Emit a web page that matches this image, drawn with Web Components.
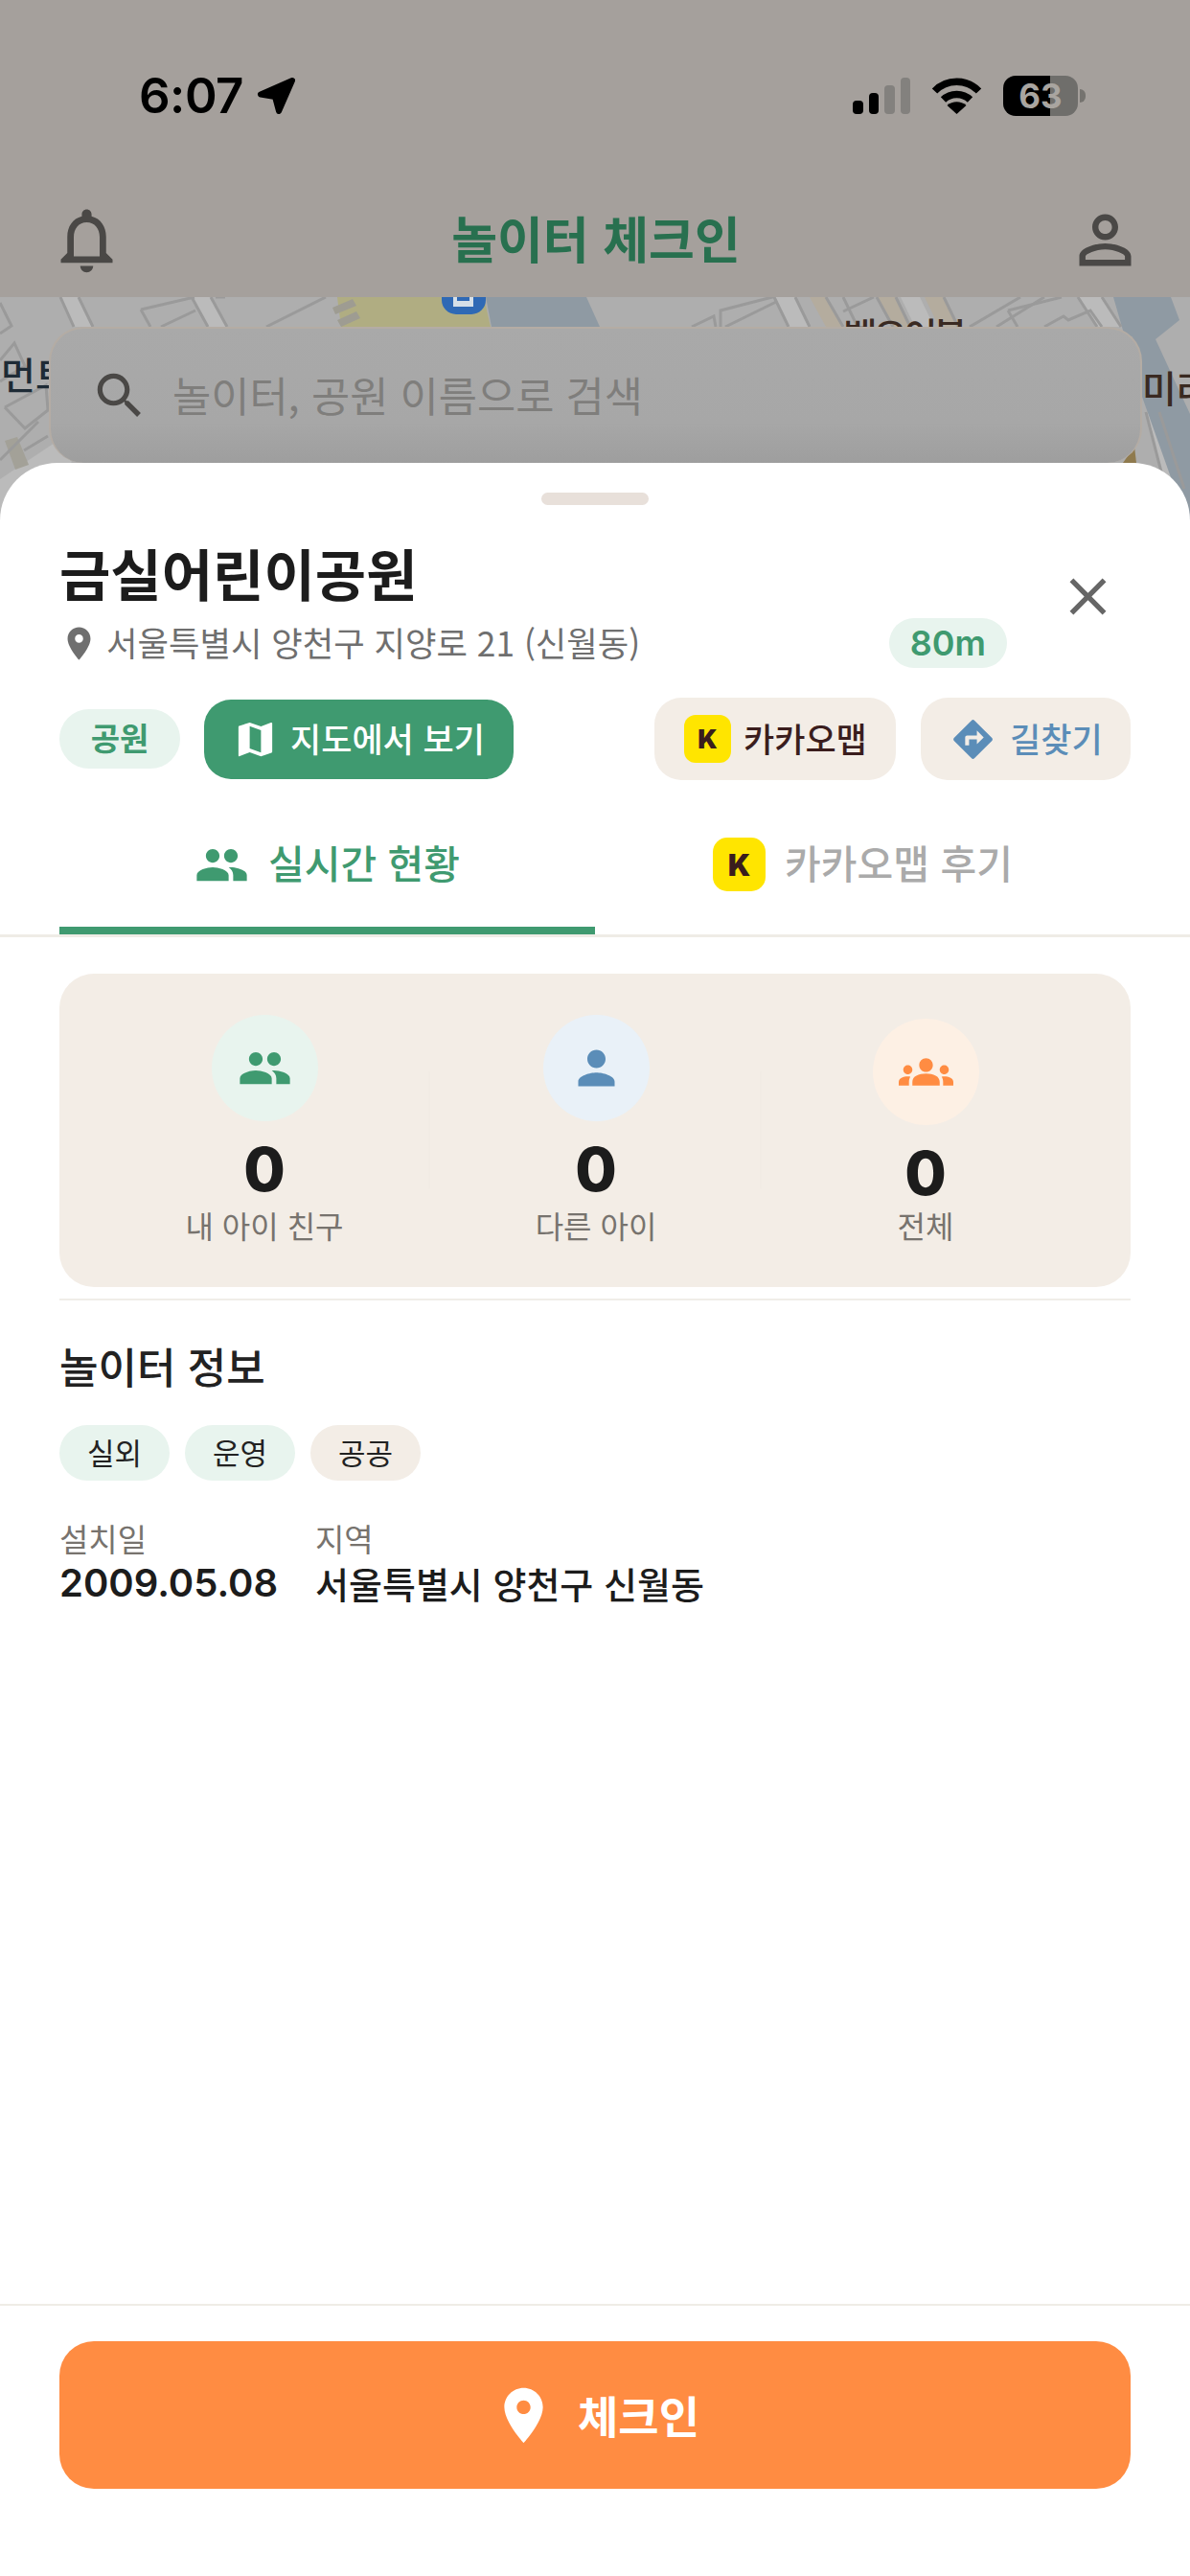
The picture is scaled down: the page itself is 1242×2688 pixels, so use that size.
<!DOCTYPE html>
<html lang="ko">
<head>
<meta charset="utf-8">
<title>놀이터 체크인</title>
<style>
  html, body { margin: 0; height: 2688px; overflow: hidden; background: #fff; }
  body {
    display: flex;
    flex-direction: column;
    font-family: "Noto Sans CJK KR", "Noto Sans", sans-serif;
    color: #222;
  }
</style>
</head>
<body>
  <app-header title-text="놀이터 체크인"></app-header>
  <map-backdrop>
    <search-box placeholder="놀이터, 공원 이름으로 검색"></search-box>
  </map-backdrop>
  <bottom-sheet>
    <place-head name="금실어린이공원" address="서울특별시 양천구 지양로 21 (신월동)" distance="80m"></place-head>
    <place-actions></place-actions>
    <tab-bar></tab-bar>
    <stat-card>
      <stat-item icon="people" color="#3f9a70" bg="#e8f4ee" value="0" label="내 아이 친구"></stat-item>
      <stat-item icon="person" color="#5b8db8" bg="#e9f1f8" value="0" label="다른 아이"></stat-item>
      <stat-item icon="groups" color="#ff8c42" bg="#fdf0e4" value="0" label="전체" last></stat-item>
    </stat-card>
    <info-section></info-section>
    <check-in-bar></check-in-bar>
  </bottom-sheet>

<script>
const ICONS = {
  bell: "M12 22c1.1 0 2-.9 2-2h-4c0 1.1.9 2 2 2zm6-6v-5c0-3.07-1.63-5.64-4.5-6.32V4c0-.83-.67-1.5-1.5-1.5s-1.5.67-1.5 1.5v.68C7.64 5.36 6 7.92 6 11v5l-2 2v1h16v-1l-2-2zm-2 1H8v-6c0-2.48 1.51-4.5 4-4.5s4 2.02 4 4.5v6z",
  account: "M12 5.9c1.16 0 2.1.94 2.1 2.1s-.94 2.1-2.1 2.1S9.9 9.16 9.9 8s.94-2.1 2.1-2.1m0 9c2.97 0 6.1 1.46 6.1 2.1v1.1H5.9V17c0-.64 3.13-2.1 6.1-2.1M12 4C9.79 4 8 5.79 8 8s1.79 4 4 4 4-1.79 4-4-1.79-4-4-4zm0 9c-2.67 0-8 1.34-8 4v3h16v-3c0-2.66-5.33-4-8-4z",
  search: "M15.5 14h-.79l-.28-.27C15.41 12.59 16 11.11 16 9.5 16 5.91 13.09 3 9.5 3S3 5.91 3 9.5 5.91 16 9.5 16c1.61 0 3.09-.59 4.23-1.57l.27.28v.79l5 4.99L20.49 19l-4.99-5zm-6 0C7.01 14 5 11.99 5 9.5S7.01 5 9.5 5 14 7.01 14 9.5 11.99 14 9.5 14z",
  close: "M19 6.41L17.59 5 12 10.59 6.41 5 5 6.41 10.59 12 5 17.59 6.41 19 12 13.41 17.59 19 19 17.59 13.41 12z",
  place: "M12 2C8.13 2 5 5.13 5 9c0 5.25 7 13 7 13s7-7.75 7-13c0-3.87-3.13-7-7-7zm0 9.5c-1.38 0-2.5-1.12-2.5-2.5s1.12-2.5 2.5-2.5 2.5 1.12 2.5 2.5-1.12 2.5-2.5 2.5z",
  people: "M16 11c1.66 0 2.99-1.34 2.99-3S17.66 5 16 5c-1.66 0-3 1.34-3 3s1.34 3 3 3zm-8 0c1.66 0 2.99-1.34 2.99-3S9.66 5 8 5C6.34 5 5 6.34 5 8s1.34 3 3 3zm0 2c-2.33 0-7 1.17-7 3.5V19h14v-2.5c0-2.33-4.67-3.5-7-3.5zm8 0c-.29 0-.62.02-.97.05 1.16.84 1.97 1.97 1.97 3.45V19h6v-2.5c0-2.33-4.67-3.5-7-3.5z",
  person: "M12 12c2.21 0 4-1.79 4-4s-1.79-4-4-4-4 1.79-4 4 1.79 4 4 4zm0 2c-2.67 0-8 1.34-8 4v2h16v-2c0-2.66-5.33-4-8-4z",
  groups: "M12 12.75c1.63 0 3.07.39 4.24.9 1.08.48 1.76 1.56 1.76 2.73V18H6v-1.61c0-1.18.68-2.26 1.76-2.73 1.17-.52 2.61-.91 4.24-.91zM4 13c1.1 0 2-.9 2-2s-.9-2-2-2-2 .9-2 2 .9 2 2 2zm1.13 1.1C4.76 14.04 4.39 14 4 14c-.99 0-1.93.21-2.78.58C.48 14.9 0 15.62 0 16.43V18h4.5v-1.61c0-.83.23-1.61.63-2.29zM20 13c1.1 0 2-.9 2-2s-.9-2-2-2-2 .9-2 2 .9 2 2 2zm4 3.43c0-.81-.48-1.53-1.22-1.85C21.93 14.21 20.99 14 20 14c-.39 0-.76.04-1.13.1.4.68.63 1.46.63 2.29V18H24v-1.57zM12 12c1.66 0 3-1.34 3-3s-1.34-3-3-3-3 1.34-3 3 1.34 3 3 3z",
  map: "M20.5 3l-.16.03L15 5.1 9 3 3.36 4.9c-.21.07-.36.25-.36.48V20.5c0 .28.22.5.5.5l.16-.03L9 18.9l6 2.1 5.64-1.9c.21-.07.36-.25.36-.48V3.5c0-.28-.22-.5-.5-.5zM15 19l-6-2.11V5l6 2.11V19z",
  directions: "M21.71 11.29l-9-9c-.39-.39-1.02-.39-1.41 0l-9 9c-.39.39-.39 1.02 0 1.41l9 9c.39.39 1.02.39 1.41 0l9-9c.39-.38.39-1.01 0-1.41zM14 14.5V12h-4v3H8v-4c0-.55.45-1 1-1h5V7.5l3.5 3.5-3.5 3.5z"
};

class UiIcon extends HTMLElement {
  constructor() {
    super();
    this.shadowDOM = this.attachShadow({mode: "open"});
  }
  connectedCallback() {
    const size = this.getAttribute("size") || 48;
    const color = this.getAttribute("color") || "currentColor";
    this.shadowDOM.innerHTML = `
      <style>
        :host { display: block; flex: none; line-height: 0; }
        svg { display: block; }
      </style>
      <svg width="${size}" height="${size}" viewBox="0 0 24 24" fill="${color}">
        <path d="${ICONS[this.getAttribute("name")]}"/>
      </svg>`;
  }
}
customElements.define("ui-icon", UiIcon);

class KakaoBadge extends HTMLElement {
  constructor() {
    super();
    this.attachShadow({mode: "open"}).innerHTML = `
      <style>
        :host {
          display: flex; flex: none; align-items: center; justify-content: center;
          width: var(--w, 49px); height: var(--h, 50px); border-radius: var(--r, 12px);
          background: #ffe500; color: #3a1d1d;
          font: 900 var(--fs, 27px)/1 Inter, "Liberation Sans", sans-serif;
        }
      </style>K`;
  }
}
customElements.define("kakao-badge", KakaoBadge);

class StatusBar extends HTMLElement {
  constructor() {
    super();
    this.attachShadow({mode: "open"}).innerHTML = `
      <style>
        :host {
          display: flex; align-items: center; box-sizing: border-box;
          height: 42px; margin-top: 79px; padding: 0 109px 0 145px; color: #000;
        }
        .time { font: 600 51px/42px Inter, sans-serif; letter-spacing: -.5px; }
        .arrow { margin-left: 14px; }
        .right { display: flex; align-items: center; margin-left: auto; }
        .signal { display: flex; align-items: flex-end; gap: 6px; height: 38px; }
        .signal i { display: block; width: 10.5px; border-radius: 4px; background: #000; }
        .signal i.off { background: #83817e; }
        .wifi { margin-left: 22px; }
        .battery {
          display: flex; align-items: center; justify-content: center;
          width: 78px; height: 42px; margin-left: 22px; border-radius: 13px;
          background: linear-gradient(90deg, #000 49px, #6f6e6b 49px);
          color: #a9a5a0; font: 700 35px/42px Inter, sans-serif;
        }
        .nub { width: 6px; height: 14px; margin-left: 2px; border-radius: 0 7px 7px 0; background: #75736f; }
      </style>
      <span class="time">6:07</span>
      <svg class="arrow" width="41" height="40" viewBox="0 0 41 40">
        <path d="M37 4 4 18.500 19 21 23 36Z" fill="#000" stroke="#000" stroke-width="6" stroke-linejoin="round"/>
      </svg>
      <div class="right">
        <div class="signal">
          <i style="height:14px"></i><i style="height:22px"></i><i class="off" style="height:30px"></i><i class="off" style="height:38px"></i>
        </div>
        <svg class="wifi" width="53" height="38" viewBox="0 0 53 38">
          <path d="M3.500 14C16 1 37 1 49.500 14" fill="none" stroke="#000" stroke-width="7.500"/>
          <path d="M12.500 23C20 15.500 33 15.500 40.500 23" fill="none" stroke="#000" stroke-width="7.500"/>
          <path d="M16.500 29C22 24 31 24 36.500 29L26.500 38Z" fill="#000"/>
        </svg>
        <div class="battery">63</div>
        <div class="nub"></div>
      </div>`;
  }
}
customElements.define("status-bar", StatusBar);

class AppHeader extends HTMLElement {
  constructor() {
    super();
    this.shadowDOM = this.attachShadow({mode: "open"});
  }
  connectedCallback() {
    this.shadowDOM.innerHTML = `
      <style>
        :host { display: block; flex: none; height: 310px; background: #a5a09c; }
        .bar {
          display: flex; align-items: center; justify-content: space-between;
          height: 81px; margin-top: 89px; padding: 0 48px 0 50px; color: #4a4846;
        }
        h1 { margin: 0 0 6px; font-size: 52px; line-height: 75px; font-weight: 700; color: #28704f; }
      </style>
      <status-bar></status-bar>
      <div class="bar">
        <ui-icon name="bell" size="81"></ui-icon>
        <h1>${this.getAttribute("title-text")}</h1>
        <ui-icon name="account" size="81"></ui-icon>
      </div>`;
  }
}
customElements.define("app-header", AppHeader);

class MapBackdrop extends HTMLElement {
  constructor() {
    super();
    this.attachShadow({mode: "open"}).innerHTML = `
      <style>
        :host {
          display: block; flex: none; position: relative; box-sizing: border-box;
          height: 233px; padding: 31px 50px 0 51px; background: #aeaeae; overflow: hidden;
        }
        svg { position: absolute; inset: 0; }
        .label { font: 500 39px "Noto Sans CJK KR", sans-serif; }
        ::slotted(*) { position: relative; }
      </style>
      <svg width="1242" height="233" viewBox="0 0 1242 233">
        <g fill="#bbbbbb">
          <path d="M63 0H82L97 31H78Z"/>
          <path d="M200 0H220L236 31H216Z"/>
          <path d="M808 0H830L845 31H823Z"/>
          <path d="M940 0H960L975 31H955Z"/>
          <path d="M1125 0H1150L1170 31H1145Z"/>
          <path d="M0 190 60 150 75 172 10 233H0Z"/>
          <path d="M1196 120 1210 120 1242 220V233H1225Z"/>
        </g>
        <g fill="#b4ac9e">
          <path d="M845 0H862L880 31H862Z"/>
          <path d="M915 0H935L950 31H932Z"/>
          <path d="M965 0H985L1000 31H980Z"/>
        </g>
        <path d="M5 150 18 146 30 175 16 180Z" fill="#a3a198"/>
        <path d="M352 0H505L512 31H356Z" fill="#b0ad82"/>
        <path d="M347 11 368 2 372 9 350 18ZM352 24 372 15 376 22 356 31Z" fill="#9e9c92"/>
        <path d="M507 0H612L626 31H513Z" fill="#8f9aa3"/>
        <path d="M1162 0H1222L1231 24 1206 44 1242 122V233H1238L1192 104Z" fill="#8f9aa3"/>
        <path d="M1172 173 1184 156 1186 173Z" fill="#8f7a4e"/>
        <g fill="none" stroke="#9a9a9a" stroke-width="3">
          <path d="M63 0 77 31M82 0 97 31"/>
          <path d="M147 13 203 0M147 13 157 31M168 31 204 14M200 0 217 31M220 0 237 31M225 0H235"/>
          <path d="M278 31 340 0"/>
          <path d="M0 6 12 30 0 38M0 66 15 48 26 72 0 88M5 115 48 92 50 118 26 137 5 115M0 170 40 130M25 160 50 145"/>
          <path d="M722 31 745 20 747 31M752 31 752 14 806 0 808 0M757 31 810 5"/>
          <path d="M808 0 823 31M830 0 845 31M862 0 880 31M880 0 895 31M915 0 932 31M935 0 950 31"/>
          <path d="M880 15 912 0M985 0 1000 31M1012 31 1065 0M1040 31 1090 0"/>
          <path d="M1052 14 1108 0M1052 14 1062 31M1090 31 1110 20 1115 24 1138 14 1150 31M1125 0 1145 31M1150 0 1170 31"/>
          <path d="M1196 120 1225 233M1210 120 1236 200"/>
        </g>
        <rect x="461" y="-22" width="46" height="40" rx="15" fill="#2f69b5"/>
        <path d="M473 -2H477V4H490V-2H494V10H473Z" fill="#d5dfe8"/>
        <text class="label" x="1" y="96" fill="#1e2b36">먼트</text>
        <text class="label" x="1192" y="110" fill="#3a2a22">미라</text>
        <text class="label" x="880" y="55" fill="#3a2a22" textLength="130">벨오이블</text>
      </svg>
      <slot></slot>`;
  }
}
customElements.define("map-backdrop", MapBackdrop);

class SearchBox extends HTMLElement {
  constructor() {
    super();
    this.shadowDOM = this.attachShadow({mode: "open"});
  }
  connectedCallback() {
    this.shadowDOM.innerHTML = `
      <style>
        :host {
          display: flex; align-items: center; gap: 24px; box-sizing: border-box;
          height: 142px; padding-left: 41px; border: 2px solid #b4aca4; border-bottom: 0;
          border-radius: 36px; background: linear-gradient(#a9a9a9, #a7a7a7 70%, #9e9e9e);
          color: #7f7e7c; font-size: 43.700px; line-height: 60px;
        }
        ui-icon { color: #4a4846; }
        span { margin-bottom: 5px; }
      </style>
      <ui-icon name="search" size="62"></ui-icon>
      <span>${this.getAttribute("placeholder")}</span>`;
  }
}
customElements.define("search-box", SearchBox);

class BottomSheet extends HTMLElement {
  constructor() {
    super();
    this.attachShadow({mode: "open"}).innerHTML = `
      <style>
        :host {
          display: flex; flex-direction: column; flex: 1; position: relative; min-height: 0;
          margin-top: -60px; border-radius: 60px 60px 0 0; background: #fff;
        }
        .handle { width: 112px; height: 13px; margin: 31px auto 0; border-radius: 7px; background: #e8e0da; }
      </style>
      <div class="handle"></div>
      <slot></slot>`;
  }
}
customElements.define("bottom-sheet", BottomSheet);

class PlaceHead extends HTMLElement {
  constructor() {
    super();
    this.shadowDOM = this.attachShadow({mode: "open"});
  }
  connectedCallback() {
    this.shadowDOM.innerHTML = `
      <style>
        :host { display: flex; align-items: center; margin-top: 37px; padding: 0 62px; }
        .main { flex: 1; min-width: 0; }
        h2 { margin: 0; height: 81px; font-size: 58px; line-height: 66px; font-weight: 700; color: #1c1c1c; }
        .address { display: flex; align-items: center; height: 52px; color: #6f6f6f; font-size: 35.300px; }
        .address span { margin: 0 0 3px 8px; }
        .address ui-icon { margin-left: 0; }
        .address .distance {
          margin: 0 0 0 auto; padding: 0 22px; height: 52px; border-radius: 26px;
          background: #e8f4ee; color: #3f9a70; font: 600 36px/52px Inter, sans-serif;
        }
        .close { margin: 0 12px 16px 52px; color: #666; }
      </style>
      <div class="main">
        <h2>${this.getAttribute("name")}</h2>
        <div class="address">
          <ui-icon name="place" size="41"></ui-icon>
          <span>${this.getAttribute("address")}</span>
          <span class="distance">${this.getAttribute("distance")}</span>
        </div>
      </div>
      <ui-icon class="close" name="close" size="65"></ui-icon>`;
  }
}
customElements.define("place-head", PlaceHead);

class PlaceActions extends HTMLElement {
  constructor() {
    super();
    this.attachShadow({mode: "open"}).innerHTML = `
      <style>
        :host { display: flex; align-items: center; margin-top: 31px; padding: 0 62px; font-size: 35px; line-height: 50px; }
        .tag {
          box-sizing: border-box; width: 126px; height: 62px; border-radius: 31px; text-align: center;
          background: #e8f4ee; color: #3f9a70; font-weight: 700; font-size: 33px; line-height: 59px;
        }
        .btn { display: flex; align-items: center; box-sizing: border-box; border-radius: 28px; }
        .btn span { margin-bottom: 3px; }
        .view {
          gap: 13px; width: 323px; height: 83px; margin-left: 25px; padding-left: 30px;
          background: #3f9a70; color: #fff; font-weight: 500;
        }
        .kakao {
          gap: 13px; width: 252px; height: 86px; margin-left: auto; padding-left: 31px;
          background: #f3ede6; color: #3a1d1d; font-weight: 500; font-size: 35px;
        }
        .route {
          gap: 14px; width: 219px; height: 86px; margin-left: 26px; padding-left: 30px;
          background: #f3ede6; color: #5b8db8; font-weight: 500; font-size: 35px;
        }
      </style>
      <div class="tag">공원</div>
      <div class="btn view"><ui-icon name="map" size="47"></ui-icon><span>지도에서 보기</span></div>
      <div class="btn kakao"><kakao-badge></kakao-badge><span>카카오맵</span></div>
      <div class="btn route"><ui-icon name="directions" size="49"></ui-icon><span>길찾기</span></div>`;
  }
}
customElements.define("place-actions", PlaceActions);

class TabBar extends HTMLElement {
  constructor() {
    super();
    this.attachShadow({mode: "open"}).innerHTML = `
      <style>
        :host { display: flex; padding: 0 62px; border-bottom: 3px solid #efece6; font-size: 41px; font-weight: 500; }
        .tab {
          flex: 1; display: flex; align-items: center; justify-content: center; gap: 20px; box-sizing: border-box;
          height: 161px; padding: 52px 0 29px; border-bottom: 8px solid transparent;
          color: #aaaaaa; line-height: 66px;
        }
        .tab span { margin-bottom: 6px; }
        .tab.on { border-bottom-color: #3f9a70; color: #3f9a70; }
        kakao-badge { --w: 55px; --h: 56px; --r: 15px; --fs: 31px; }
      </style>
      <div class="tab on"><ui-icon name="people" size="57"></ui-icon><span>실시간 현황</span></div>
      <div class="tab"><kakao-badge></kakao-badge><span>카카오맵 후기</span></div>`;
  }
}
customElements.define("tab-bar", TabBar);

class StatCard extends HTMLElement {
  constructor() {
    super();
    this.attachShadow({mode: "open"}).innerHTML = `
      <style>
        :host {
          display: grid; grid-template-columns: 346px 346px 342px; box-sizing: border-box;
          height: 327px; margin: 38px 62px 0; padding: 0 41px; border-radius: 36px; background: #f3ede6;
        }
      </style>
      <slot></slot>`;
  }
}
customElements.define("stat-card", StatCard);

class StatItem extends HTMLElement {
  constructor() {
    super();
    this.shadowDOM = this.attachShadow({mode: "open"});
  }
  connectedCallback() {
    this.shadowDOM.innerHTML = `
      <style>
        :host {
          display: flex; flex-direction: column; align-items: center; position: relative;
          padding-top: 43px; text-align: center;
        }
        :host([last]) { padding-top: 47px; }
        :host(:not([last]))::after {
          content: ""; position: absolute; right: 0; top: 102px; width: 2px; height: 122px; background: #f1ebe4;
        }
        .circle {
          display: flex; align-items: center; justify-content: center;
          width: 111px; height: 111px; border-radius: 50%; background: ${this.getAttribute("bg")};
        }
        .value { margin-top: 20px; color: #1c1c1c; font: 800 63px/60px Inter, sans-serif; }
        .label { margin-top: 6px; color: #77736e; font-size: 32px; line-height: 44px; }
        :host([last]) .label { margin-top: 2px; }
      </style>
      <div class="circle"><ui-icon name="${this.getAttribute("icon")}" size="57" color="${this.getAttribute("color")}"></ui-icon></div>
      <div class="value">${this.getAttribute("value")}</div>
      <div class="label">${this.getAttribute("label")}</div>`;
  }
}
customElements.define("stat-item", StatItem);

class InfoSection extends HTMLElement {
  constructor() {
    super();
    this.attachShadow({mode: "open"}).innerHTML = `
      <style>
        :host { display: block; flex: 1; margin: 12px 62px 0; border-top: 2px solid #f0ede8; }
        h3 { margin: 38px 0 0; font-size: 44px; line-height: 60px; font-weight: 500; color: #222; }
        .chips { display: flex; gap: 16px; margin-top: 32px; }
        .chips span {
          width: 115px; height: 58px; border-radius: 29px; text-align: center;
          background: #e8f4ee; font-size: 31px; line-height: 56px; color: #222;
        }
        .chips .plain { background: #f3ede6; }
        .facts { display: flex; margin-top: 38px; }
        .facts > div:first-child { width: 267px; }
        .label { color: #77736e; font-size: 33px; line-height: 44px; }
        .value { font-size: 38px; font-weight: 500; line-height: 50px; color: #1c1c1c; }
        .value.num { font: 600 40px/50px Inter, sans-serif; }
      </style>
      <h3>놀이터 정보</h3>
      <div class="chips"><span>실외</span><span>운영</span><span class="plain">공공</span></div>
      <div class="facts">
        <div><div class="label">설치일</div><div class="value num">2009.05.08</div></div>
        <div><div class="label">지역</div><div class="value">서울특별시 양천구 신월동</div></div>
      </div>`;
  }
}
customElements.define("info-section", InfoSection);

class CheckInBar extends HTMLElement {
  constructor() {
    super();
    this.attachShadow({mode: "open"}).innerHTML = `
      <style>
        :host { display: block; flex: none; padding: 37px 62px 91px; border-top: 2px solid #efece6; }
        .btn {
          display: flex; align-items: center; justify-content: center; gap: 22px;
          height: 154px; border-radius: 36px; background: #ff8c42; color: #fff;
          font-size: 46px; font-weight: 700; line-height: 60px;
        }
        span { margin-bottom: 3px; }
      </style>
      <div class="btn"><ui-icon name="place" size="69"></ui-icon><span>체크인</span></div>`;
  }
}
customElements.define("check-in-bar", CheckInBar);
</script>
</body>
</html>
